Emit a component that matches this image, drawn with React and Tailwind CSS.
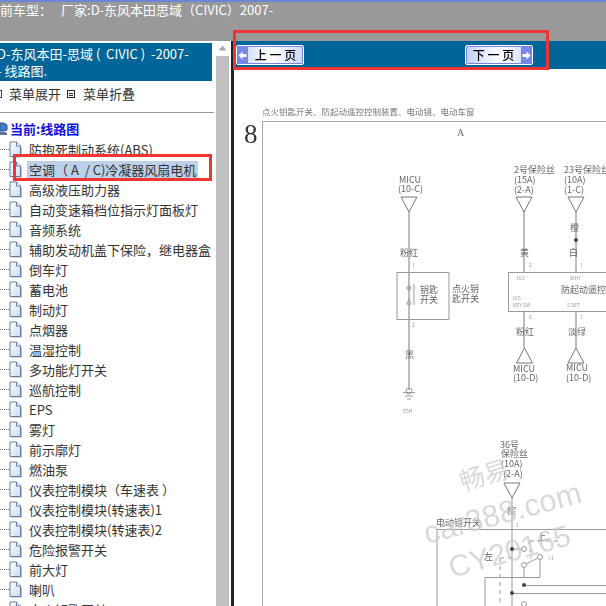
import React from "react";

const cjk = { fontFamily: '"Noto Sans CJK SC", "Liberation Sans", sans-serif' };

const treeItems = [
  "防抱死制动系统(ABS)",
  "空调（\u00a0A\u00a0\u00a0/ C)冷凝器风扇电机",
  "高级液压助力器",
  "自动变速箱档位指示灯面板灯",
  "音频系统",
  "辅助发动机盖下保险，继电器盒",
  "倒车灯",
  "蓄电池",
  "制动灯",
  "点烟器",
  "温湿控制",
  "多功能灯开关",
  "巡航控制",
  "EPS",
  "雾灯",
  "前示廓灯",
  "燃油泵",
  "仪表控制模块（车速表 ）",
  "仪表控制模块(转速表)1",
  "仪表控制模块(转速表)2",
  "危险报警开关",
  "前大灯",
  "喇叭",
  "点火钥匙开关",
];

const DocIcon = () => (
  <svg width="13" height="17" viewBox="0 0 13 17" className="shrink-0">
    <defs>
      <linearGradient id="docFill" x1="0" y1="0" x2="1" y2="1">
        <stop offset="0" stopColor="#ffffff" />
        <stop offset="1" stopColor="#c4dcf8" />
      </linearGradient>
    </defs>
    <path d="M2 2h6l4 4v10H2z" fill="#a4acbc" transform="translate(0.8 0.6)" />
    <path d="M1 1h6.500l4 4v10.500H1z" fill="url(#docFill)" stroke="#6a7a9c" strokeWidth="1" />
    <path d="M7.500 1v4h4" fill="#e8f0fc" stroke="#6a7a9c" strokeWidth="1" />
  </svg>
);

const RootIcon = () => (
  <svg width="8" height="14" viewBox="0 0 8 14" className="shrink-0">
    <path d="M0 1h4l3 2v5l-3 1H0z" fill="#3f7fc8" stroke="#27508c" />
    <path d="M0 10h5l2 1v2H0z" fill="#5c6f94" />
  </svg>
);

const TreeRow = ({ label, active }) => (
  <div className="flex h-5 items-center whitespace-nowrap">
    <div className="w-[9px] border-t border-dotted border-gray-500" />
    <DocIcon />
    <span className={active ? "ml-[5px] bg-[#bcd0e8] px-[2px] text-[13px] leading-[17px] text-[#333]" : "ml-[7px] text-[13px] leading-[17px] text-[#333]"}>
      {label}
    </span>
  </div>
);

const Sidebar = () => (
  <div className="w-[231px] shrink-0 flex bg-white overflow-hidden">
    <div className="w-[216px] shrink-0 pt-[2px] overflow-hidden">
      <div className="w-[212px] h-[38px] bg-[#006699] text-white text-[13px] leading-[17px] pt-[2px] overflow-hidden whitespace-nowrap">
        <div className="-ml-[3px]">{"D-东风本田-思域\u00a0(\u00a0\u00a0CIVIC\u00a0)\u00a0\u00a0-2007-"}</div>
        <div className="-ml-[3px]">- 线路图.</div>
      </div>
      <div className="flex items-center h-[26px] text-[13px] text-[#333] whitespace-nowrap">
        <div className="w-[8px] h-[8px] -ml-[6px] border border-gray-700" />
        <span className="ml-[7px]">菜单展开</span>
        <div className="ml-[6px] w-[8px] h-[8px] border border-gray-800 flex items-center justify-center">
          <div className="w-[4px] h-[3px] border-y border-gray-800" />
        </div>
        <span className="ml-[8px]">菜单折叠</span>
      </div>
      <div className="h-[1px] mt-[5px] w-[214px] bg-[#999]" />
      <div className="mt-[6px] flex h-5 items-center text-[13px] font-bold text-[#1010e0] whitespace-nowrap">
        <RootIcon />
        <span className="ml-[2px]">当前:线路图</span>
      </div>
      {treeItems.map((item, i) => (
        <TreeRow key={item} label={item} active={i === 1} />
      ))}
    </div>
    <div className="w-[13px] shrink-0 flex flex-col">
      <div className="h-[15px] pt-[4px] flex items-start justify-center">
        <svg width="9" height="6" viewBox="0 0 9 6">
          <path d="M4.500 0.500L8.500 5.500H0.500z" fill="#a8a8a8" />
        </svg>
      </div>
      <div className="flex-1 bg-[#c0c0c0]" />
    </div>
  </div>
);

const Arrow = ({ dir }) => (
  <span className="w-[11px] h-full bg-[#7688e6] flex items-center justify-center shrink-0">
    <svg width="9" height="9" viewBox="0 0 9 9">
      <path d={dir === "prev" ? "M0.500 4.500L4.500 0.500V3H8.500V6H4.500V8.500z" : "M8.500 4.500L4.500 0.500V3H0.500V6H4.500V8.500z"} fill="#ffffff" />
    </svg>
  </span>
);

const NavButton = ({ label, dir }) => (
  <button className="flex h-[20px] w-[68px] items-center border border-white rounded-[2px] bg-gradient-to-r from-[#c4d0f8] via-[#ffffff] to-[#ccd6f8] shadow-[inset_0_0_0_1px_#7a88dc] text-[12px] font-medium text-black leading-none blur-[0.3px]">
    {dir === "prev" && <Arrow dir="prev" />}
    <span className="flex-1 text-center whitespace-nowrap">{label}</span>
    {dir === "next" && <Arrow dir="next" />}
  </button>
);

const Tri = ({ x, y, w = 8, h = 15, up }) => (
  <path
    d={up ? `M${x - w} ${y}L${x + w} ${y}L${x} ${y - h}z` : `M${x - w} ${y}L${x + w} ${y}L${x} ${y + h}z`}
    fill="#fff"
    stroke="#777"
    strokeWidth="1"
  />
);

const Diagram = () => (
  <svg viewBox="234 69 372 537" width="372" height="537" className="blur-[0.5px] block" style={cjk}>
    <g fontSize="8.500" fill="#777">
      <text x="262" y="115">点火钥匙开关、防起动遥控控制装置、电动镜、电动车窗</text>
    </g>
    <g stroke="#aaa" strokeWidth="1" fill="none">
      <path d="M262 121.500H606M262.500 121V606" />
    </g>
    <text x="244" y="143" fontSize="27" fill="#333" fontFamily="Liberation Serif, serif">8</text>
    <text x="457" y="136" fontSize="10" fill="#666" fontFamily="Liberation Serif, serif">A</text>

    <g stroke="#999" strokeWidth="1.300" fill="none">
      <path d="M409 212V390M524 211V272M524 311V348M576 211V272M576 311V348" />
    </g>
    <Tri x={409} y={197} />
    <Tri x={524} y={197} />
    <Tri x={576} y={197} />
    <Tri x={524.500} y={363} up />
    <Tri x={576} y={363} up />
    <Tri x={512} y={483} />

    <g fontSize="9" fill="#666">
      <text x="399" y="183">MICU</text>
      <text x="398" y="192">(10-C)</text>
      <text x="514" y="173">2号保险丝</text>
      <text x="514" y="183">(15A)</text>
      <text x="514" y="193">(2-A)</text>
      <text x="564" y="173">23号保险丝</text>
      <text x="564" y="183">(10A)</text>
      <text x="564" y="193">(1-C)</text>
      <text x="400" y="256">粉红</text>
      <text x="520" y="256">黄</text>
      <text x="569" y="256">白</text>
      <text x="570" y="231">橙</text>
      <text x="420" y="293">钥匙</text>
      <text x="420" y="303">开关</text>
      <text x="452" y="292">点火钥</text>
      <text x="452" y="302">匙开关</text>
      <text x="405" y="358">黑</text>
      <text x="516" y="335">粉红</text>
      <text x="568" y="335">淡绿</text>
      <text x="561" y="293">防起动遥控控制装置</text>
      <text x="513" y="372">MICU</text>
      <text x="513" y="381">(10-D)</text>
      <text x="566" y="371">MICU</text>
      <text x="566" y="381">(10-D)</text>
      <text x="500" y="448">36号</text>
      <text x="501" y="457">保险丝</text>
      <text x="501" y="467">(10A)</text>
      <text x="503" y="477">(2-A)</text>
      <text x="507" y="514">棕</text>
      <text x="436" y="526">电动镜开关</text>
      <text x="537" y="540">上</text>
      <text x="484" y="560">左</text>
    </g>
    <g fontSize="5" fill="#999">
      <text x="412" y="267">1</text>
      <text x="412" y="327">2</text>
      <text x="529" y="267">2</text>
      <text x="580" y="267">1</text>
      <text x="529" y="319">6</text>
      <text x="580" y="319">3</text>
      <text x="516" y="280">1G1</text>
      <text x="570" y="280">WH7</text>
      <text x="513" y="300">IG5</text>
      <text x="513" y="307">KEY SW</text>
      <text x="567" y="307">S SET</text>
      <text x="403" y="413">E5H</text>
      <text x="516" y="527">1</text>
      <text x="529" y="559">3</text>
      <text x="548" y="560">+3</text>
    </g>

    <g stroke="#999" strokeWidth="1" fill="none">
      <rect x="397" y="272.500" width="52" height="47" />
      <rect x="508.500" y="272.500" width="120" height="39" />
      <path d="M414 284V305M409 287V291M409 298V302" />
      <circle cx="409" cy="288" r="2" />
      <circle cx="409" cy="303" r="2" />
      <path d="M403 392.500H415M405 396H413M407 399H411" />
      <circle cx="409" cy="391" r="3" />
      <path d="M437 606V529.500H606M512 497V606M485 606V577.500H540V557M524 585.500H606M512 593.500H606M524 565L540 557M524 567V577" />
      <circle cx="524" cy="549" r="2.500" fill="#fff" />
      <circle cx="540" cy="557" r="2.500" fill="#fff" />
      <circle cx="524" cy="565" r="2.500" fill="#fff" />
      <circle cx="524" cy="604" r="2.500" fill="#fff" />
      <path d="M512 549H521.500" />
      <path d="M500 558H512M500 558V606M530 541H560M530 541V552" strokeDasharray="4 4" />
    </g>
    <g fill="#444">
      <circle cx="576" cy="240" r="2" />
      <circle cx="512" cy="549" r="2" />
      <circle cx="524" cy="585" r="2" />
      <circle cx="512" cy="593" r="2" />
    </g>

    <g fill="#ccc" fillOpacity="0.75" fontFamily="Liberation Sans, Noto Sans CJK SC, sans-serif">
      <text transform="translate(463 491) rotate(-17)" fontSize="25">畅易</text>
      <text transform="translate(427 544) rotate(-15)" fontSize="31">car388.com</text>
      <text transform="translate(452 578) rotate(-15.500)" fontSize="30">CY20165</text>
    </g>
  </svg>
);

const App = () => {
  return (
    <div className="relative h-[606px] w-[606px] overflow-hidden bg-white" style={cjk}>
      <div className="h-[41px] bg-[#999999] border-t-2 border-[#6a86d4]">
        <div className="-ml-[13px] text-[13px] leading-[16px] text-white whitespace-nowrap">
          当前车型：<span className="ml-[9px]">厂家:D-东风本田思域（CIVIC）2007-</span>
        </div>
      </div>
      <div className="flex h-[565px]">
        <Sidebar />
        <div className="w-[3px] shrink-0 bg-[#222]" />
        <div className="flex-1 min-w-0 flex flex-col">
          <div className="h-[28px] shrink-0 bg-[#006699] flex items-center pl-[2px] gap-[161px]">
            <NavButton label="上 一 页" dir="prev" />
            <NavButton label="下 一 页" dir="next" />
          </div>
          <Diagram />
        </div>
      </div>
      {/* red annotation boxes drawn over the screenshot */}
      <div className="absolute left-[233px] top-[30px] h-[40px] w-[316px] border-[3px] border-[#f03434]" />
      <div className="absolute left-[13px] top-[154px] h-[27px] w-[199px] border-[3px] border-[#f03434]" />
    </div>
  );
};

export default App;
